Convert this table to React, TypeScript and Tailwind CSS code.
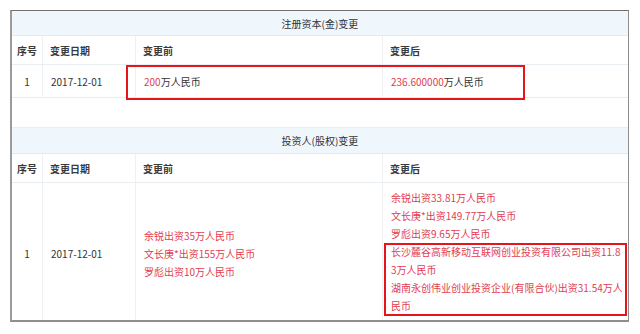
import React from 'react';

const RED = 'text-[#e23c50]';

const cols = ['w-[31px]', 'w-[93px]', 'w-[247px]', 'w-[245px]'];

function TitleRow({ title, h }: { title: string; h: string }) {
  return (
    <div className={`${h} flex items-center justify-center bg-[#f0f7fc] border-b border-[#e3eaf0] text-[#333] text-[10px]`}>
      {title}
    </div>
  );
}

function HeadRow() {
  const labels = ['序号', '变更日期', '变更前', '变更后'];
  return (
    <div className="h-[29px] flex border-b border-[#e8edf1] text-[10px] font-semibold text-[#3a3a3a]">
      {labels.map((l, i) => (
        <div
          key={l}
          className={`${cols[i]} flex items-center ${i === 0 ? 'justify-center' : 'pl-[7px]'} ${i < 3 ? 'border-r border-[#eef1f4]' : ''}`}
        >
          {l}
        </div>
      ))}
    </div>
  );
}

export default function App() {
  const before = ['余锐出资35万人民币', '文长庚*出资155万人民币', '罗彪出资10万人民币'];
  const after = [
    '余锐出资33.81万人民币',
    '文长庚*出资149.77万人民币',
    '罗彪出资9.65万人民币',
    '长沙麓谷高新移动互联网创业投资有限公司出资11.83万人民币',
    '湖南永创伟业创业投资企业(有限合伙)出资31.54万人民币',
  ];

  return (
    <div
      className="w-[640px] h-[334px] bg-white pt-[10px] pl-[10px]"
      style={{ fontFamily: '"Microsoft YaHei", "Noto Sans CJK SC", "Noto Sans", sans-serif' }}
    >
      <div className="relative w-[619px] bg-white border-t border-r border-t-[#6f6f6f] border-r-[#8c8c8c] border-l-2 border-b-2 border-l-[#9b9b9b] border-b-[#8e8e8e]">
        {/* 注册资本 */}
        <TitleRow title="注册资本(金)变更" h="h-[25px]" />
        <HeadRow />
        <div className="h-[33px] flex border-b border-[#e8edf1] text-[10px] text-[#333]">
          <div className={`${cols[0]} flex items-center justify-center border-r border-[#eef1f4]`}>1</div>
          <div className={`${cols[1]} flex items-center pl-[8px] border-r border-[#eef1f4]`}>2017-12-01</div>
          <div className={`${cols[2]} flex items-center pl-[8px] border-r border-[#eef1f4]`}>
            <span className={RED}>200</span>万人民币
          </div>
          <div className={`${cols[3]} flex items-center pl-[8px]`}>
            <span className={RED}>236.600000</span>万人民币
          </div>
        </div>
        <div className="h-[30px] border-b border-[#e8edf1]" />

        {/* 投资人 */}
        <TitleRow title="投资人(股权)变更" h="h-[26px]" />
        <HeadRow />
        <div className="h-[137px] flex text-[10px] text-[#333] leading-[18px]">
          <div className={`${cols[0]} flex items-center justify-center pt-[4px] border-r border-[#eef1f4]`}>1</div>
          <div className={`${cols[1]} flex items-center pl-[8px] pt-[4px] border-r border-[#eef1f4]`}>2017-12-01</div>
          <div className={`${cols[2]} flex flex-col justify-center pl-[8px] pt-[4px] border-r border-[#eef1f4] ${RED}`}>
            {before.map((t) => (
              <div key={t}>{t}</div>
            ))}
          </div>
          <div className={`${cols[3]} pl-[8px] pr-[5px] pt-[6px] ${RED}`}>
            {after.map((t) => (
              <div key={t} className="break-all">{t}</div>
            ))}
          </div>
        </div>

        {/* highlight boxes */}
        <div className="absolute left-[114px] top-[54px] w-[399px] h-[35px] border-2 border-[#e8141c] pointer-events-none" />
        <div className="absolute left-[372px] top-[232px] w-[243px] h-[73px] border-2 border-[#e8141c] pointer-events-none" />
      </div>
    </div>
  );
}
